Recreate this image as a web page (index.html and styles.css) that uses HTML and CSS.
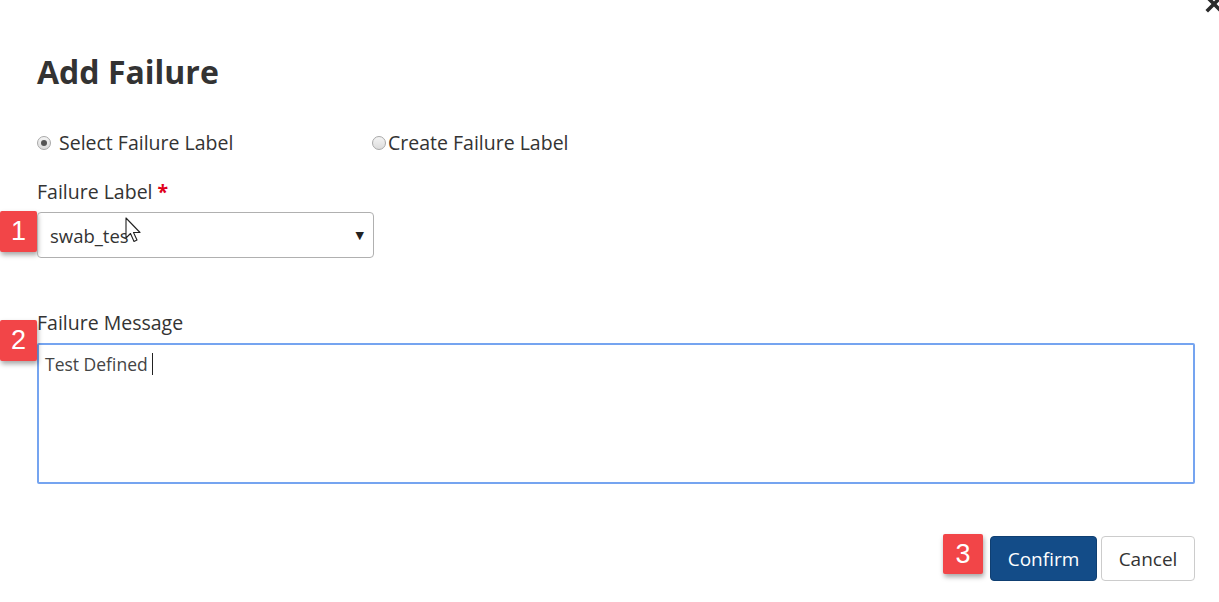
FILE: index.html
```html
<!DOCTYPE html>
<html>
<head>
<meta charset="utf-8">
<link rel="stylesheet" href="styles.css">
</head>
<body>
<div class="modal">
  <svg class="close" width="18" height="18" viewBox="0 0 18 18"><path d="M3 3 L15 15 M15 3 L3 15" stroke="#2b2b2b" stroke-width="3.6" stroke-linecap="square"/></svg>
  <h1 class="title">Add Failure</h1>
  <div class="radios">
    <label class="radio radio-first"><span class="dot checked"></span><span class="radio-text">Select Failure Label</span></label>
    <label class="radio"><span class="dot"></span><span class="radio-text tight">Create Failure Label</span></label>
  </div>
  <div class="field">
    <div class="label">Failure Label <span class="req">*</span></div>
    <div class="control">
      <span class="badge badge-1">1</span>
      <div class="select">
        <span class="select-text">swab_tes</span>
        <span class="arrow">&#9660;</span>
        <svg class="pointer" width="20" height="28" viewBox="0 0 20 28"><path d="M1 1 L1 21 L5.5 16.5 L9 24.5 L12 23 L8.5 15.5 L15 15.5 Z" fill="#fff" stroke="#222" stroke-width="1.1" stroke-linejoin="round"/></svg>
      </div>
    </div>
  </div>
  <div class="field field-msg">
    <div class="label">Failure Message</div>
    <div class="control">
      <span class="badge badge-2">2</span>
      <div class="textarea"><span class="ta-text">Test Defined</span><span class="caret"></span></div>
    </div>
  </div>
  <div class="actions">
    <span class="badge badge-3">3</span>
    <button class="btn btn-primary">Confirm</button>
    <button class="btn btn-default">Cancel</button>
  </div>
</div>
</body>
</html>
```
FILE: styles.css
```css
html, body {
  margin: 0;
  padding: 0;
  background: #fff;
}
body {
  font-family: "Open Sans", "Noto Sans", sans-serif;
  color: #333;
  width: 1219px;
  height: 602px;
  overflow: hidden;
}
.modal {
  position: relative;
  padding: 52px 24px 0 37px;
}
.close {
  position: absolute;
  top: -5px;
  right: -4px;
}
.title {
  margin: 0;
  height: 40px;
  line-height: 40px;
  font-size: 32px;
  font-weight: 700;
  color: #333;
}
.radios {
  display: flex;
  margin-top: 39px;
  height: 24px;
  align-items: center;
}
.radio {
  display: flex;
  align-items: center;
  font-size: 19.5px;
  line-height: 24px;
  color: #333;
}
.radio-first {
  width: 335px;
}
.dot {
  width: 12px;
  height: 12px;
  border-radius: 50%;
  border: 1px solid #a8a8a8;
  background: linear-gradient(#f4f4f4, #dcdcdc);
  margin-right: 8px;
  position: relative;
  box-sizing: content-box;
}
.dot.checked::after {
  content: "";
  position: absolute;
  left: 3px;
  top: 3px;
  width: 6px;
  height: 6px;
  border-radius: 50%;
  background: #555;
}
.radio-text.tight {
  margin-left: -6px;
}
.field {
  margin-top: 25px;
}
.label {
  font-size: 19.5px;
  line-height: 24px;
  height: 24px;
  color: #333;
}
.req {
  color: #e0001b;
  font-weight: 700;
}
.control {
  position: relative;
  margin-top: 8px;
}
.select {
  position: relative;
  width: 337px;
  height: 46px;
  box-sizing: border-box;
  border: 1px solid #b0b0b0;
  border-radius: 4px;
  display: flex;
  align-items: center;
  padding: 0 12px;
  justify-content: space-between;
}
.select-text {
  font-size: 18.5px;
  color: #333;
}
.arrow {
  font-size: 11px;
  color: #222;
  font-family: "DejaVu Sans", sans-serif;
  margin-right: -3px;
}
.pointer {
  position: absolute;
  left: 87px;
  top: 4px;
}
.field-msg {
  margin-top: 53px;
}
.textarea {
  height: 141px;
  box-sizing: border-box;
  border: 2px solid #75a4f0;
  border-radius: 2px;
  padding: 8px 6px;
  font-size: 17.5px;
  line-height: 22px;
  color: #444;
  display: flex;
  align-items: flex-start;
}
.caret {
  display: inline-block;
  width: 1px;
  height: 22px;
  background: #222;
  margin-left: 4px;
}
.badge {
  position: absolute;
  width: 37px;
  height: 41px;
  background: #f24548;
  color: #fff;
  font-family: "Liberation Sans", Arial, sans-serif;
  font-size: 27px;
  line-height: 41px;
  text-align: center;
  box-shadow: 1px 3px 5px rgba(0, 0, 0, 0.35);
  border-radius: 2px;
}
.badge-1 {
  left: -37px;
  top: -1px;
}
.badge-2 {
  left: -37px;
  top: -23px;
}
.actions {
  position: relative;
  display: flex;
  justify-content: flex-end;
  gap: 4px;
  margin-top: 52px;
}
.badge-3 {
  position: static;
  width: 40px;
  height: 40px;
  line-height: 40px;
  margin-right: 3px;
  margin-top: -2px;
}
.btn {
  height: 45px;
  font-family: "Open Sans", sans-serif;
  font-size: 19px;
  border-radius: 4px;
  padding: 0 12px;
  cursor: pointer;
}
.btn-primary {
  background: #134c88;
  border: 1px solid #0f3f72;
  color: #fff;
  width: 107px;
}
.btn-default {
  background: #fff;
  border: 1px solid #ccc;
  color: #333;
  width: 94px;
}
```
